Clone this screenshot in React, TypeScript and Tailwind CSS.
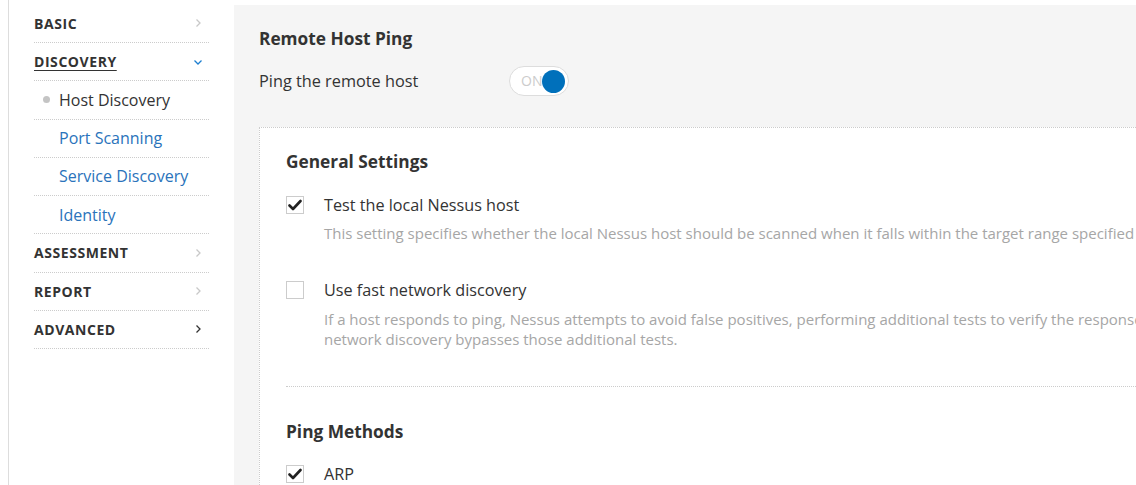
import React from "react";

const font = { fontFamily: '"Open Sans", "Liberation Sans", sans-serif' };

function Chevron({ dir, color }: { dir: "right" | "down"; color: string }) {
  return (
    <svg width="10" height="10" viewBox="0 0 10 10" fill="none" stroke={color} strokeWidth="1.3">
      {dir === "right" ? <path d="M3.5 1.5 L7 5 L3.5 8.5" /> : <path d="M1.5 3.5 L5 7 L8.5 3.5" />}
    </svg>
  );
}

function Check({ checked }: { checked: boolean }) {
  return (
    <div className="w-[18px] h-[18px] border border-[#cccccc] bg-white flex items-center justify-center shrink-0 mt-[2px]">
      {checked && (
        <svg width="14" height="12" viewBox="0 0 14 12">
          <path d="M1.5 6.5 L5 10 L12.5 2" fill="none" stroke="#222" strokeWidth="2.6" strokeLinecap="round" strokeLinejoin="round" />
        </svg>
      )}
    </div>
  );
}

const rowCls = "h-[37.25px] box-content border-b border-dotted border-[#cccccc] flex items-center justify-between pr-[6px]";

export default function App() {
  return (
    <div className="w-[1136px] h-[485px] overflow-hidden bg-white flex text-[#333333]" style={font}>
      <div className="w-[8px] shrink-0" />
      <div className="w-[226px] shrink-0 border-l border-[#dddddd] pl-[25px] pr-[25px] pt-[4.75px]">
        <div className={rowCls}>
          <span className="text-[14px] font-bold tracking-[0.04em] text-[#333]">BASIC</span>
          <Chevron dir="right" color="#c8c8c8" />
        </div>
        <div className={rowCls}>
          <span className="text-[14px] font-bold tracking-[0.04em] text-[#333] underline underline-offset-[3px]">DISCOVERY</span>
          <Chevron dir="down" color="#1e7fd0" />
        </div>
        <div className={rowCls + " pl-[9px] justify-start"}>
          <span className="w-[7px] h-[7px] rounded-full bg-[#c4c4c4] mr-[9px]" />
          <span className="text-[16px] text-[#333]">Host Discovery</span>
        </div>
        <div className={rowCls + " pl-[25px] justify-start"}>
          <span className="text-[16px] text-[#2a73bb]">Port Scanning</span>
        </div>
        <div className={rowCls + " pl-[25px] justify-start"}>
          <span className="text-[16px] text-[#2a73bb]">Service Discovery</span>
        </div>
        <div className={rowCls + " pl-[25px] justify-start"}>
          <span className="text-[16px] text-[#2a73bb]">Identity</span>
        </div>
        <div className={rowCls}>
          <span className="text-[14px] font-bold tracking-[0.04em] text-[#333]">ASSESSMENT</span>
          <Chevron dir="right" color="#c8c8c8" />
        </div>
        <div className={rowCls}>
          <span className="text-[14px] font-bold tracking-[0.04em] text-[#333]">REPORT</span>
          <Chevron dir="right" color="#c8c8c8" />
        </div>
        <div className={rowCls}>
          <span className="text-[14px] font-bold tracking-[0.04em] text-[#333]">ADVANCED</span>
          <Chevron dir="right" color="#333333" />
        </div>
      </div>
      <div className="flex-1 min-w-0 mt-[5px] bg-[#f5f5f5] pl-[25px] pt-[22px]">
        <div className="text-[17.3px] font-bold leading-[24px] text-[#333]">Remote Host Ping</div>
        <div className="flex items-center mt-[15px] h-[30px]">
          <span className="text-[16.3px] w-[250px] text-[#333]">Ping the remote host</span>
          <div className="relative w-[60px] h-[30px] rounded-full border border-[#dddddd] bg-white">
            <span className="absolute left-[11px] top-[4px] text-[14px] leading-[20px] text-[#cccccc]">ON</span>
            <span className="absolute right-[3px] top-[2.5px] w-[23px] h-[23px] rounded-full bg-[#0070bb]" />
          </div>
        </div>
        <div className="mt-[31px] bg-white border-l border-t border-dotted border-[#cccccc] pl-[26px] pt-[22px] h-[400px]">
          <div className="text-[17.3px] font-bold leading-[24px] text-[#333]">General Settings</div>
          <div className="flex mt-[20px]">
            <Check checked />
            <div className="ml-[20px]">
              <div className="text-[16.2px] leading-[22px] text-[#333]">Test the local Nessus host</div>
              <div className="text-[15px] leading-[20px] text-[#a6a6a6] mt-[7px] whitespace-nowrap">
                This setting specifies whether the local Nessus host should be scanned when it falls within the target range specified for the scan.
              </div>
            </div>
          </div>
          <div className="flex mt-[36px]">
            <Check checked={false} />
            <div className="ml-[20px]">
              <div className="text-[16.2px] leading-[22px] text-[#333]">Use fast network discovery</div>
              <div className="text-[15px] leading-[20px] text-[#a6a6a6] mt-[8px] whitespace-nowrap">
                If a host responds to ping, Nessus attempts to avoid false positives, performing additional tests to verify the response did not come from a proxy or load balancer. Fast
                <br />
                network discovery bypasses those additional tests.
              </div>
            </div>
          </div>
          <div className="mt-[37px] border-t border-dotted border-[#cccccc]" />
          <div className="text-[17.3px] font-bold leading-[24px] text-[#333] mt-[33px]">Ping Methods</div>
          <div className="flex mt-[19px]">
            <Check checked />
            <div className="ml-[20px] text-[16.2px] leading-[22px] text-[#333]">ARP</div>
          </div>
        </div>
      </div>
    </div>
  );
}
